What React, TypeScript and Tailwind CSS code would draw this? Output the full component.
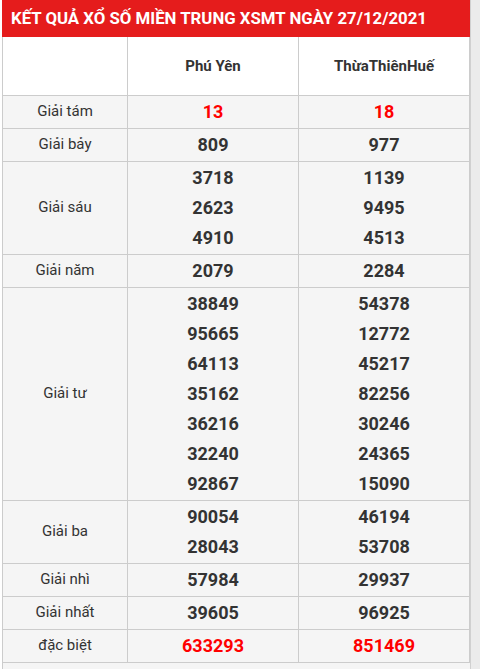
import React from 'react';

type Row = { label: string; a: string[]; b: string[]; red?: boolean };

const rows: Row[] = [
  { label: 'Giải tám', a: ['13'], b: ['18'], red: true },
  { label: 'Giải bảy', a: ['809'], b: ['977'] },
  { label: 'Giải sáu', a: ['3718', '2623', '4910'], b: ['1139', '9495', '4513'] },
  { label: 'Giải năm', a: ['2079'], b: ['2284'] },
  {
    label: 'Giải tư',
    a: ['38849', '95665', '64113', '35162', '36216', '32240', '92867'],
    b: ['54378', '12772', '45217', '82256', '30246', '24365', '15090'],
  },
  { label: 'Giải ba', a: ['90054', '28043'], b: ['46194', '53708'] },
  { label: 'Giải nhì', a: ['57984'], b: ['29937'] },
  { label: 'Giải nhất', a: ['39605'], b: ['96925'] },
  { label: 'đặc biệt', a: ['633293'], b: ['851469'], red: true },
];

const NumCell = ({ nums, red }: { nums: string[]; red?: boolean }) => (
  <td className="border border-[#cccccc] py-px text-center">
    {nums.map((n) => (
      <div
        key={n}
        className={`h-[30px] leading-[30px] text-[18px] font-bold ${red ? 'text-[#ff0000]' : 'text-[#333333]'}`}
      >
        {n}
      </div>
    ))}
  </td>
);

export default function App() {
  return (
    <div className="flex h-[669px] w-[480px] overflow-hidden bg-white font-['Roboto',sans-serif]">
      <div className="ml-[2px] w-[468px]">
        <div className="flex h-[37px] items-center bg-[#e51c1c] pl-[9px] text-[16.8px] font-bold text-white">
          KẾT QUẢ XỔ SỐ MIỀN TRUNG XSMT NGÀY 27/12/2021
        </div>
        <table className="w-full border-collapse">
          <colgroup>
            <col className="w-[125px]" />
            <col className="w-[171px]" />
            <col className="w-[171px]" />
          </colgroup>
          <tbody>
            <tr className="h-[58px] bg-white">
              <td className="border border-t-0 border-[#cccccc]" />
              <td className="border border-t-0 border-[#cccccc] text-center text-[15px] font-bold text-[#333333]">
                Phú Yên
              </td>
              <td className="border border-t-0 border-[#cccccc] text-center text-[15px] font-bold text-[#333333]">
                ThừaThiênHuế
              </td>
            </tr>
            {rows.map((r) => (
              <tr key={r.label} className="bg-[#f5f5f5]">
                <td className="border border-[#cccccc] text-center text-[15px] text-[#333333]">{r.label}</td>
                <NumCell nums={r.a} red={r.red} />
                <NumCell nums={r.b} red={r.red} />
              </tr>
            ))}
          </tbody>
        </table>
        <div className="h-[10px] border-l border-[#cccccc] bg-[#f5f5f5]" />
      </div>
      <div className="flex-1 border-l border-[#d0d0d0] bg-[#ebebeb]" />
    </div>
  );
}
